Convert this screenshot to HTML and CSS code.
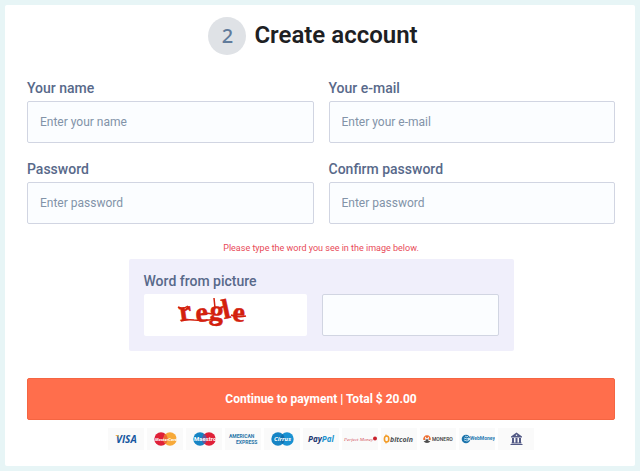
FILE: index.html
```html
<!DOCTYPE html>
<html lang="en">
<head>
<meta charset="utf-8">
<meta name="viewport" content="width=device-width, initial-scale=1">
<title>Create account</title>
<link rel="stylesheet" href="styles.css">
</head>
<body>
<main class="card">
  <header class="heading">
    <span class="step">2</span>
    <h1 class="title">Create account</h1>
  </header>
  <form class="form">
    <div class="fields">
      <div class="field">
        <label class="label" for="name">Your name</label>
        <input class="input" id="name" type="text" placeholder="Enter your name">
      </div>
      <div class="field">
        <label class="label" for="email">Your e-mail</label>
        <input class="input" id="email" type="email" placeholder="Enter your e-mail">
      </div>
      <div class="field">
        <label class="label" for="password">Password</label>
        <input class="input" id="password" type="password" placeholder="Enter password">
      </div>
      <div class="field">
        <label class="label" for="confirm">Confirm password</label>
        <input class="input" id="confirm" type="password" placeholder="Enter password">
      </div>
    </div>
    <p class="alert">Please type the word you see in the image below.</p>
    <div class="captcha">
      <label class="label" for="word">Word from picture</label>
      <div class="captcha-row">
        <div class="captcha-image">
          <svg width="163" height="42" viewBox="0 0 163 42" role="img" aria-label="Captcha">
            <text class="captcha-word" x="36 52 65 80 88" y="27 28 25 25 27" rotate="-8 -4 6 -12 4">regle</text>
            <g class="captcha-stroke">
              <path d="M34 13q5 3 10-1M37 27q7-2 13-1q12 1 22-1M70 4l1 10M54 21q8-3 14-1M87 21q7 3 15 1M67 30q5 2 10-2"/>
            </g>
          </svg>
        </div>
        <input class="input" id="word" type="text">
      </div>
    </div>
    <button class="submit" type="submit">Continue to payment | Total $ 20.00</button>
  </form>
  <ul class="methods">
    <li class="method"><svg viewBox="0 0 36 22" role="img" aria-label="Visa">
      <text class="brand-bold" x="8" y="15" font-size="10" fill="#1657a0">VISA</text>
      <path d="M7 7h3l1 3q-1-2-4-3z" fill="#f0a22b"/>
    </svg></li>
    <li class="method"><svg viewBox="0 0 36 22" role="img" aria-label="MasterCard">
      <circle cx="14" cy="11" r="6.7" fill="#df2038"/><circle cx="23" cy="11" r="6.7" fill="#f7a938"/>
      <path d="M18.500 6a6.7 6.7 0 0 1 0 10a6.7 6.7 0 0 1 0-10z" fill="#ee6a35"/>
      <text class="brand-bold" x="8" y="13" font-size="4" fill="#fff">MasterCard</text>
    </svg></li>
    <li class="method"><svg viewBox="0 0 36 22" role="img" aria-label="Maestro">
      <circle cx="14" cy="11" r="6.7" fill="#1684c4"/><circle cx="23" cy="11" r="6.7" fill="#df2038"/>
      <path d="M18.500 6a6.7 6.7 0 0 1 0 10a6.7 6.7 0 0 1 0-10z" fill="#65569a"/>
      <text class="brand-heavy" x="8" y="13" font-size="6" fill="#fff">Maestro</text>
    </svg></li>
    <li class="method"><svg viewBox="0 0 36 22" role="img" aria-label="American Express">
      <text class="brand-heavy" x="4" y="10" font-size="5" fill="#2875a8">AMERICAN</text>
      <text class="brand-heavy" x="11" y="16" font-size="5" fill="#2875a8">EXPRESS</text>
    </svg></li>
    <li class="method"><svg viewBox="0 0 36 22" role="img" aria-label="Cirrus">
      <circle cx="14" cy="11" r="6.7" fill="#1684c4"/><circle cx="23" cy="11" r="6.7" fill="#1991d2"/>
      <path d="M18.500 6a6.7 6.7 0 0 1 0 10a6.7 6.7 0 0 1 0-10z" fill="#116fae"/>
      <text class="brand-bold" x="10" y="13" font-size="6" fill="#fff">Cirrus</text>
    </svg></li>
    <li class="method"><svg viewBox="0 0 36 22" role="img" aria-label="PayPal">
      <text class="brand-bold" x="5" y="14" font-size="8" fill="#21366f">Pay<tspan fill="#2093cf">Pal</tspan></text>
    </svg></li>
    <li class="method"><svg viewBox="0 0 36 22" role="img" aria-label="Perfect Money">
      <text class="brand-serif" x="2" y="13" font-size="5" fill="#d4525b">Perfect Money</text>
      <circle cx="33" cy="10.500" r="2" fill="#c9222c"/>
    </svg></li>
    <li class="method"><svg viewBox="0 0 36 22" role="img" aria-label="Bitcoin">
      <ellipse cx="5.600" cy="11" rx="2.200" ry="3" fill="none" stroke="#f29a25" stroke-width="1.600"/>
      <path d="M5 6.500v2M5 13.500v2" stroke="#f29a25"/>
      <text class="brand-bold" x="9" y="14" font-size="7" fill="#4d5054">bitcoin</text>
    </svg></li>
    <li class="method"><svg viewBox="0 0 36 22" role="img" aria-label="Monero">
      <path d="M3.300 12a3.800 3.800 0 1 1 7.400 0H9V8.500l-2 2l-2-2V12z" fill="#ed6b2d"/>
      <path d="M3.600 13h2v-2.600L7 11.800l1.400-1.400V13h2a3.800 3.800 0 0 1-6.800 0z" fill="#4c4c4c"/>
      <text class="brand-plain" x="12" y="13" font-size="5" fill="#34383b">MONERO</text>
    </svg></li>
    <li class="method"><svg viewBox="0 0 36 22" role="img" aria-label="WebMoney">
      <circle cx="7" cy="11" r="4.300" fill="#1c74ac"/>
      <path d="M6 8l2 1l1-1M5 10l3 1l2-1M5 12l3 1l2-1" fill="none" stroke="#d5edf7" stroke-width=".8"/>
      <circle cx="10" cy="11" r="1.300" fill="#c9e6f3"/>
      <text class="brand-heavy" x="11" y="12" font-size="5" fill="#2c7fb4">WebMoney</text>
    </svg></li>
    <li class="method"><svg viewBox="0 0 36 22" role="img" aria-label="Bank transfer">
      <path d="M13 8.500L18.500 4.500L24 8.500v1H13zM14 10h2v5h-2zM17.500 10h2v5h-2zM21 10h2v5h-2zM13.500 14.500h10v1h-10zM12.500 16h12v1h-12z" fill="#525985"/>
      <circle cx="18.500" cy="7.200" r=".8" fill="#fafafa"/>
    </svg></li>
  </ul>
</main>
</body>
</html>
```

FILE: styles.css
```css
* {
  box-sizing: border-box;
}

body {
  margin: 0;
  padding: 5px;
  background: #e7f5f6;
  font-family: Roboto, "Liberation Sans", sans-serif;
  color: #58698a;
}

.card {
  padding: 12px 20px 16px 22px;
  background: #fff;
  border-radius: 2px;
}

.heading {
  display: flex;
  justify-content: center;
  align-items: center;
  gap: 8px;
  margin-bottom: 23px;
  padding-right: 16px;
}

.step {
  display: flex;
  justify-content: center;
  align-items: center;
  width: 38px;
  height: 38px;
  border-radius: 50%;
  background: #dfe2e6;
  color: #617b9b;
  font: 500 20px/24px "Noto Sans", sans-serif;
}

.title {
  margin: 0;
  padding-bottom: 3px;
  color: #1d2023;
  font-size: 24px;
  font-weight: 600;
  line-height: 32px;
}

.fields {
  display: grid;
  grid-template-columns: 1fr 1fr;
  gap: 16px 15px;
}

.label {
  display: block;
  margin-bottom: 3px;
  font-size: 14px;
  font-weight: 500;
  line-height: 20px;
}

.input {
  display: block;
  width: 100%;
  height: 42px;
  padding: 0 12px;
  border: 1px solid #d1d5e2;
  border-radius: 2px;
  background: #fbfdff;
  color: #58698a;
  font-family: inherit;
  font-size: 12px;
}

.input::placeholder {
  color: #8293a8;
  opacity: 1;
}

.alert {
  margin: 16px 0 3px;
  color: #e84a58;
  font-size: 9px;
  line-height: 16px;
  text-align: center;
}

.captcha {
  max-width: 385px;
  margin: 0 auto;
  padding: 12px 15px 15px;
  border-radius: 2px;
  background: #f0effb;
}

.captcha-row {
  display: grid;
  grid-template-columns: 12fr 13fr;
  gap: 15px;
}

.captcha-image {
  height: 42px;
  border-radius: 2px;
  background: #fff;
}

.captcha-image svg {
  display: block;
}

.captcha-word {
  fill: #d3200d;
  stroke: #d3200d;
  stroke-width: .5;
  font-family: "Liberation Serif", serif;
  font-size: 28px;
  font-weight: 700;
}

.captcha-stroke {
  fill: none;
  stroke: #d3200d;
  stroke-width: 1.5;
}

.submit {
  display: block;
  width: 100%;
  height: 42px;
  margin-top: 27px;
  border: 1px solid #f56542;
  border-radius: 2px;
  background: #ff6e4c;
  color: #fff;
  font-family: inherit;
  font-size: 12px;
  font-weight: 700;
}

.methods {
  display: flex;
  justify-content: center;
  gap: 3px;
  margin: 8px 0 0;
  padding: 0;
  list-style: none;
}

.method {
  width: 36px;
  height: 22px;
  background: #fafafa;
}

.method svg {
  display: block;
}

.brand-bold {
  font-family: "Open Sans", sans-serif;
  font-style: italic;
  font-weight: 700;
}

.brand-heavy {
  font-family: Roboto, sans-serif;
  font-weight: 700;
}

.brand-plain {
  font-family: Roboto, sans-serif;
  font-weight: 500;
}

.brand-serif {
  font-family: "Liberation Serif", serif;
  font-style: italic;
}
```
